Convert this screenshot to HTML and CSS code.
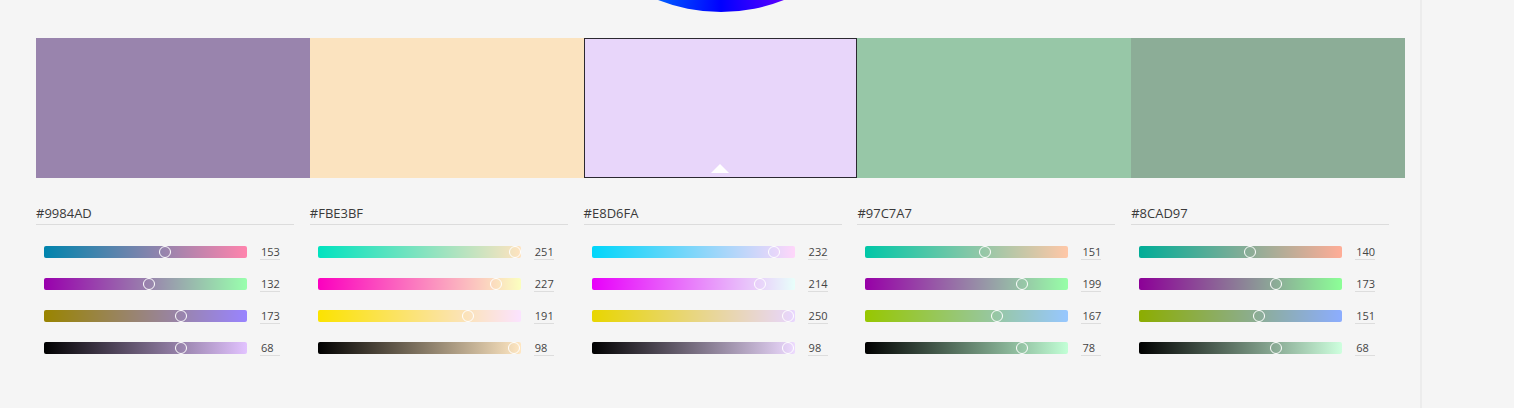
FILE: index.html
```html
<!DOCTYPE html>
<html lang="en">
<head>
<meta charset="utf-8">
<title>Color theme</title>
<link rel="stylesheet" href="styles.css">
</head>
<body>
<div class="app">
  <main class="main">
    <div class="wheel-area"><div class="wheel"></div></div>
    <div class="swatches">
      <div class="swatch" style="background:#9984AD"></div>
      <div class="swatch" style="background:#FBE3BF"></div>
      <div class="swatch selected" style="background:#E8D6FA"><span class="caret"></span></div>
      <div class="swatch" style="background:#97C7A7"></div>
      <div class="swatch" style="background:#8CAD97"></div>
    </div>
    <div class="controls">
      <section class="col">
        <div class="hex">#9984AD</div>
        <div class="row"><div class="track" style="--a:rgb(0,132,173);--b:rgb(255,132,173);--p:0.6"><span class="thumb"></span></div><span class="num">153</span></div>
        <div class="row"><div class="track" style="--a:rgb(153,0,173);--b:rgb(153,255,173);--p:0.518"><span class="thumb"></span></div><span class="num">132</span></div>
        <div class="row"><div class="track" style="--a:rgb(153,132,0);--b:rgb(153,132,255);--p:0.678"><span class="thumb"></span></div><span class="num">173</span></div>
        <div class="row"><div class="track" style="--a:rgb(0,0,0);--b:rgb(226,195,255);--p:0.68"><span class="thumb"></span></div><span class="num">68</span></div>
      </section>
      <section class="col">
        <div class="hex">#FBE3BF</div>
        <div class="row"><div class="track" style="--a:rgb(0,227,191);--b:rgb(255,227,191);--p:0.984"><span class="thumb"></span></div><span class="num">251</span></div>
        <div class="row"><div class="track" style="--a:rgb(251,0,191);--b:rgb(251,255,191);--p:0.89"><span class="thumb"></span></div><span class="num">227</span></div>
        <div class="row"><div class="track" style="--a:rgb(251,227,0);--b:rgb(251,227,255);--p:0.749"><span class="thumb"></span></div><span class="num">191</span></div>
        <div class="row"><div class="track" style="--a:rgb(0,0,0);--b:rgb(255,231,194);--p:0.98"><span class="thumb"></span></div><span class="num">98</span></div>
      </section>
      <section class="col">
        <div class="hex">#E8D6FA</div>
        <div class="row"><div class="track" style="--a:rgb(0,214,250);--b:rgb(255,214,250);--p:0.91"><span class="thumb"></span></div><span class="num">232</span></div>
        <div class="row"><div class="track" style="--a:rgb(232,0,250);--b:rgb(232,255,250);--p:0.839"><span class="thumb"></span></div><span class="num">214</span></div>
        <div class="row"><div class="track" style="--a:rgb(232,214,0);--b:rgb(232,214,255);--p:0.98"><span class="thumb"></span></div><span class="num">250</span></div>
        <div class="row"><div class="track" style="--a:rgb(0,0,0);--b:rgb(237,218,255);--p:0.98"><span class="thumb"></span></div><span class="num">98</span></div>
      </section>
      <section class="col">
        <div class="hex">#97C7A7</div>
        <div class="row"><div class="track" style="--a:rgb(0,199,167);--b:rgb(255,199,167);--p:0.592"><span class="thumb"></span></div><span class="num">151</span></div>
        <div class="row"><div class="track" style="--a:rgb(151,0,167);--b:rgb(151,255,167);--p:0.78"><span class="thumb"></span></div><span class="num">199</span></div>
        <div class="row"><div class="track" style="--a:rgb(151,199,0);--b:rgb(151,199,255);--p:0.655"><span class="thumb"></span></div><span class="num">167</span></div>
        <div class="row"><div class="track" style="--a:rgb(0,0,0);--b:rgb(194,255,214);--p:0.78"><span class="thumb"></span></div><span class="num">78</span></div>
      </section>
      <section class="col">
        <div class="hex">#8CAD97</div>
        <div class="row"><div class="track" style="--a:rgb(0,173,151);--b:rgb(255,173,151);--p:0.549"><span class="thumb"></span></div><span class="num">140</span></div>
        <div class="row"><div class="track" style="--a:rgb(140,0,151);--b:rgb(140,255,151);--p:0.678"><span class="thumb"></span></div><span class="num">173</span></div>
        <div class="row"><div class="track" style="--a:rgb(140,173,0);--b:rgb(140,173,255);--p:0.592"><span class="thumb"></span></div><span class="num">151</span></div>
        <div class="row"><div class="track" style="--a:rgb(0,0,0);--b:rgb(206,255,222);--p:0.68"><span class="thumb"></span></div><span class="num">68</span></div>
      </section>
    </div>
  </main>
  <aside class="side"></aside>
</div>
</body>
</html>
```

FILE: styles.css
```css
* { box-sizing: border-box; }
html, body { margin: 0; padding: 0; }
body {
  background: #f5f5f5;
  font-family: "Open Sans", "Noto Sans", sans-serif;
  color: #3d3d3d;
  height: 408px;
  overflow: hidden;
}
.app {
  display: flex;
  height: 408px;
}
.main {
  width: 1420px;
  flex: none;
  padding: 0 15px 0 36px;
}
.side {
  flex: 1;
  border-left: 2px solid #ececec;
  background: #f5f5f5;
}
.wheel-area {
  height: 38px;
  overflow: hidden;
  display: flex;
  justify-content: center;
}
.wheel {
  flex: none;
  width: 342px;
  height: 342px;
  margin-top: -330px;
  border-radius: 50%;
  background: conic-gradient(
    hsl(60,100%,50%) 0deg,
    hsl(0,100%,50%) 60deg,
    hsl(300,100%,50%) 120deg,
    hsl(240,100%,50%) 180deg,
    hsl(180,100%,50%) 240deg,
    hsl(120,100%,50%) 300deg,
    hsl(60,100%,50%) 360deg);
}
.swatches {
  display: grid;
  grid-template-columns: repeat(5, 1fr);
  height: 140px;
}
.swatch {
  display: flex;
  justify-content: center;
  align-items: flex-end;
}
.swatch.selected {
  border: 1px solid #2b2830;
  padding-bottom: 4px;
}
.caret {
  width: 0;
  height: 0;
  border-left: 9px solid transparent;
  border-right: 9px solid transparent;
  border-bottom: 9px solid #ffffff;
}
.controls {
  display: grid;
  grid-template-columns: repeat(5, 1fr);
}
.col {
  padding-top: 26px;
}
.hex {
  width: 258px;
  font-size: 13px;
  line-height: 18px;
  padding-bottom: 2px;
  border-bottom: 1px solid #dcdcdc;
  color: #3a3a3a;
  margin-bottom: 11px;
}
.row {
  height: 32px;
  display: flex;
  align-items: center;
  padding-left: 8px;
  gap: 13px;
}
.track {
  position: relative;
  width: 203px;
  height: 12px;
  border-radius: 2px;
  background: linear-gradient(to right, var(--a), var(--b));
}
.thumb {
  position: absolute;
  top: 0;
  left: calc(var(--p) * (100% - 6px) - 3px);
  width: 12px;
  height: 12px;
  border-radius: 50%;
  border: 1.5px solid #ffffff;
}
.num {
  width: 20px;
  font-size: 11px;
  line-height: 14px;
  border-bottom: 1px solid #dddddd;
  color: #444444;
  padding-left: 1px;
}
```
